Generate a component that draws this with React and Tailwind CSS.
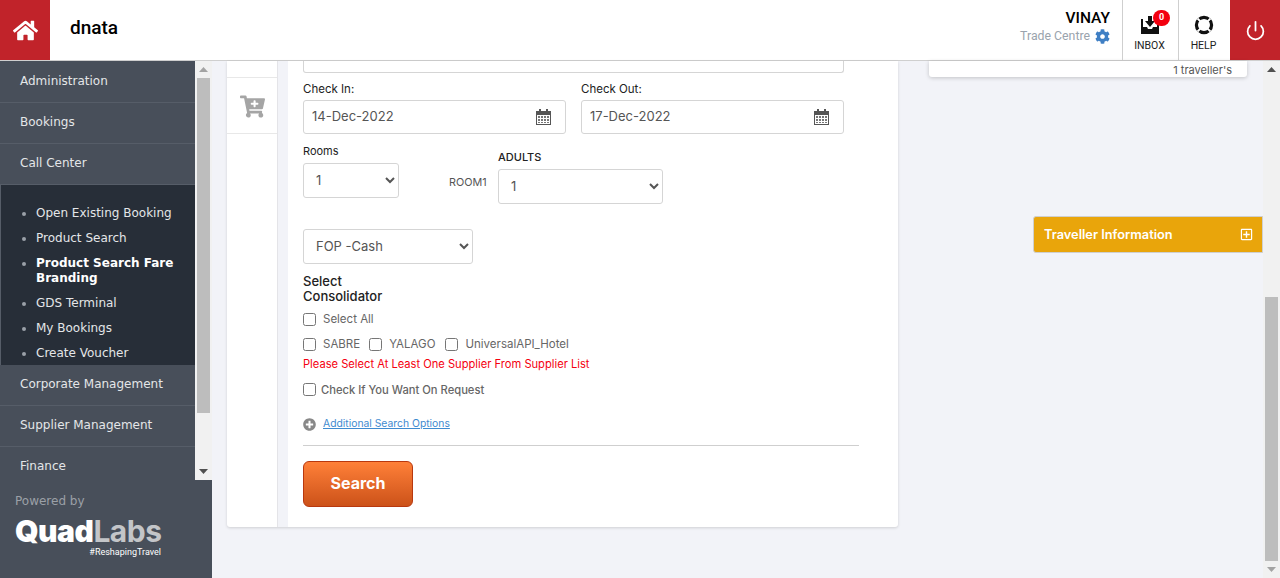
import { FaHome, FaCog, FaCartPlus, FaPlusCircle, FaRegPlusSquare } from 'react-icons/fa';
import { FiPower } from 'react-icons/fi';

const topItems = ['Administration', 'Bookings', 'Call Center'];
const bottomItems = ['Corporate Management', 'Supplier Management', 'Finance'];
const subItems = [
  { label: 'Open Existing Booking' },
  { label: 'Product Search' },
  { label: 'Product Search Fare Branding', active: true },
  { label: 'GDS Terminal' },
  { label: 'My Bookings' },
  { label: 'Create Voucher' },
];

const formFont = "font-['Inter','Liberation_Sans',sans-serif]";

const ScrollArrow = ({ down }) => (
  <svg width="9" height="5" viewBox="0 0 9 5" className={down ? 'rotate-180' : ''}>
    <path d="M4.5 0 9 5H0z" fill="currentColor" />
  </svg>
);

const InboxIcon = () => (
  <svg width="18" height="18" viewBox="0 0 18 18">
    <path fillRule="evenodd" d="M0 3h18v15H0zM2 5v6h4l1 2h4l1-2h4V5z" fill="#111" />
    <path d="M2 3h5v2H2zM11 3h5v2h-5z" fill="#fff" />
    <path d="M7 0h4v5h3l-5 6-5-6h3z" fill="#111" />
  </svg>
);

const RingIcon = () => (
  <svg width="20" height="20" viewBox="0 0 20 20">
    <circle cx="10" cy="10" r="7.6" fill="none" stroke="#111" strokeWidth="3.2" />
    <path d="M3.5 3.5 7.2 7.2M16.5 3.5 12.8 7.2M3.5 16.5 7.2 12.8M16.5 16.5 12.8 12.8" stroke="#fff" strokeWidth="1.8" />
  </svg>
);

const CalendarIcon = () => (
  <svg width="15" height="16" viewBox="0 0 15 16">
    <path fillRule="evenodd" d="M0 2h15v14H0zM1 6v9h13V6z" fill="#555" />
    <path d="M3 0h2v4H3zM10 0h2v4h-2z" fill="#555" />
    <path d="M2 7h2v2H2zM5 7h2v2H5zM8 7h2v2H8zM11 7h2v2h-2zM2 10h2v2H2zM5 10h2v2H5zM8 10h2v2H8zM11 10h2v2h-2zM2 13h2v1H2zM5 13h2v1H5zM8 13h2v1H8zM11 13h2v1h-2z" fill="#777" />
  </svg>
);

const MenuItem = ({ label }) => (
  <div className="h-[41px] flex items-center pl-5 pb-[3px] border-b border-[#565d68] text-[12px] text-[#e4e6e8]">
    {label}
  </div>
);

const Header = () => (
  <header className="h-[61px] shrink-0 flex bg-white border-b border-[#cfcfcf]">
    <div className="w-[50px] bg-[#c1232a] flex items-center justify-center">
      <FaHome className="text-white text-[25px]" />
    </div>
    <div className="flex-1 pl-5 flex items-center text-[19px] font-medium text-black font-['Roboto',sans-serif] pb-[3px]">
      dnata
    </div>
    <div className="flex flex-col items-end pr-3 pt-[9px]">
      <div className="text-[15.5px] font-medium leading-[18px] text-black font-['Roboto',sans-serif]">VINAY</div>
      <div className="flex items-center gap-[5px] text-[12.3px] text-[#9aa3ad] font-['Roboto',sans-serif]">
        Trade Centre <FaCog className="text-[#3f7fc4] text-[15px]" />
      </div>
    </div>
    <div className="relative w-[56px] border-l border-[#cfcfcf] flex flex-col items-center pt-[16px] pr-[2px]">
      <InboxIcon />
      <span className="absolute top-[10px] left-[30px] w-[17px] h-[16px] rounded-full bg-[#f3000f] text-white text-[9px] font-bold flex items-center justify-center font-['Roboto',sans-serif]">0</span>
      <span className="mt-[4px] text-[10.5px] text-[#222] font-['Roboto',sans-serif]">INBOX</span>
    </div>
    <div className="w-[52px] border-l border-[#cfcfcf] flex flex-col items-center pt-[15px] pr-[2px]">
      <RingIcon />
      <span className="mt-[3px] text-[10.5px] text-[#222] font-['Roboto',sans-serif]">HELP</span>
    </div>
    <div className="w-[50px] bg-[#c1232a] flex items-center justify-center">
      <FiPower className="text-white text-[21px]" />
    </div>
  </header>
);

const Sidebar = () => (
  <aside className="w-[212px] shrink-0 flex flex-col bg-[#484f5a] font-['DejaVu_Sans',sans-serif]">
    <div className="h-[419px] flex overflow-hidden">
      <nav className="w-[195px] pt-[1px]">
        {topItems.map((item) => <MenuItem key={item} label={item} />)}
        <ul className="bg-[#272e38] border-l border-[#565d68] pt-[21px] pl-[35px] pr-2 h-[180px] list-disc marker:text-[#9aa0a8] text-[12px] leading-[15px] text-[#e4e6e8]">
          {subItems.map((s) => (
            <li key={s.label} className={`mb-[10px] ${s.active ? 'font-bold text-white' : ''}`}>{s.label}</li>
          ))}
        </ul>
        {bottomItems.map((item) => <MenuItem key={item} label={item} />)}
      </nav>
      <div className="w-[17px] bg-[#f1f1f1] flex flex-col items-center text-[#a3a3a3]">
        <div className="h-[17px] flex items-center justify-center"><ScrollArrow /></div>
        <div className="w-[13px] h-[335px] bg-[#bdbdbd]" />
        <div className="flex-1" />
        <div className="h-[17px] flex items-center justify-center text-[#505050]"><ScrollArrow down /></div>
      </div>
    </div>
    <div className="pl-[15px] pt-[12px] text-[12px] text-[#9ba0a7]">Powered by</div>
    <div className="pl-[15px] mt-[7px] w-[161px]">
      <div className="text-[30px] leading-[28px] font-black tracking-[-0.5px] text-white font-['Inter',sans-serif]">
        Quad<span className="text-[#c3c5c8] font-bold">Labs</span>
      </div>
      <div className="mt-[2px] text-right text-[9px] leading-[10px] text-white font-['Roboto',sans-serif]">#ReshapingTravel</div>
    </div>
  </aside>
);

const DateField = ({ label, value }) => (
  <div className="w-[263px]">
    <label className="block text-[11.5px] leading-[14px] text-[#222] mb-[4px] -mt-[1px]">{label}</label>
    <div className="h-[34px] flex items-center justify-between border border-[#d5d5d5] rounded-[3px] pl-2 pr-[14px]">
      <input readOnly value={value} className="w-[150px] text-[13px] text-[#555] outline-none" />
      <CalendarIcon />
    </div>
  </div>
);

const Check = ({ label, className = '' }) => (
  <label className={`flex items-center gap-[7px] text-[11.5px] text-[#666] ${className}`}>
    <input type="checkbox" className="m-0 w-[13px] h-[13px]" />
    <span className="pt-[2px]">{label}</span>
  </label>
);

const SearchForm = () => (
  <div className={`flex-1 pl-[15px] text-[#333] ${formFont}`}>
    <div className="w-[541px] h-[12px] border border-t-0 border-[#d5d5d5] rounded-b-[3px]" />
    <div className="flex gap-[15px] mt-[10px]">
      <DateField label="Check In:" value="14-Dec-2022" />
      <DateField label="Check Out:" value="17-Dec-2022" />
    </div>
    <div className="flex mt-[10px]">
      <div className="w-[146px]">
        <div className="text-[11px] leading-[14px] text-[#222] mb-[5px]">Rooms</div>
        <select className="w-[96px] h-[35px] pl-2 pb-[2px] border border-[#d5d5d5] rounded-[3px] text-[13px] text-[#555] bg-white">
          <option>1</option>
        </select>
      </div>
      <div className="w-[49px] pt-[24px] mt-[7px] text-[10.8px] text-[#555]">ROOM1</div>
      <div className="pt-[6px]">
        <div className="text-[11px] leading-[14px] font-medium text-[#222] mb-[5px]">ADULTS</div>
        <select className="w-[165px] h-[35px] pl-2 pb-[2px] border border-[#d5d5d5] rounded-[3px] text-[13px] text-[#555] bg-white">
          <option>1</option>
        </select>
      </div>
    </div>
    <select className="block mt-[25px] w-[170px] h-[35px] pl-2 pb-[2px] border border-[#d5d5d5] rounded-[3px] text-[13px] text-[#555] bg-white">
      <option>FOP -Cash</option>
    </select>
    <div className="mt-[10px] w-[100px] text-[13px] leading-[15px] font-medium text-[#222]">Select Consolidator</div>
    <Check label="Select All" className="mt-[7px] h-[16px]" />
    <div className="flex gap-[9px] mt-[9px] h-[16px]">
      <Check label="SABRE" />
      <Check label="YALAGO" />
      <Check label="UniversalAPI_Hotel" className="ml-[1px]" />
    </div>
    <div className="mt-[4px] h-[16px] text-[11.15px] leading-[16px] text-[#f5000f]">Please Select At Least One Supplier From Supplier List</div>
    <Check label="Check If You Want On Request" className="mt-[9px] h-[16px] !gap-[5px] !text-[11.2px] font-medium" />
    <div className="flex items-center gap-[7px] mt-[19px] h-[16px]">
      <FaPlusCircle className="text-[#888] text-[13px]" />
      <a className="text-[10.35px] text-[#3f8bd0] underline">Additional Search Options</a>
    </div>
    <hr className="mt-[13px] w-[556px] border-[#cfcfcf]" />
    <button className="mt-[15px] w-[110px] h-[46px] pb-[2px] rounded-[6px] border border-[#b8380f] bg-gradient-to-b from-[#ff8038] to-[#cc5219] text-white text-[16px] font-bold">
      Search
    </button>
  </div>
);

export default function App() {
  return (
    <div className="h-[578px] w-[1280px] overflow-hidden flex flex-col bg-[#f2f3f8]">
      <Header />
      <div className="flex-1 flex min-h-0">
        <Sidebar />
        <main className="flex-1 flex min-w-0 pl-[15px]">
          <div className="w-[671px] h-[466px] flex bg-white rounded-b-[3px] shadow-[0_1px_3px_rgba(0,0,0,0.15)]">
            <div className="w-[51px] border-r border-[#e4e4e8] shrink-0">
              <div className="h-[17px] border-b border-[#e8e8e8]" />
              <div className="h-[56px] pt-[1px] border-b border-[#e8e8e8] flex items-center justify-center">
                <FaCartPlus className="text-[#a5a5a5] text-[25px]" />
              </div>
            </div>
            <div className="w-[10px] bg-[#f2f3f8] shrink-0" />
            <SearchForm />
          </div>
          <div className="flex-1 flex flex-col items-end">
            <div className="w-[318px] h-[16px] mr-[16px] bg-white rounded-b-[3px] shadow-[0_1px_4px_rgba(0,0,0,0.2)] text-right pr-[15px] text-[11px] leading-[18px] text-[#555] font-['Inter',sans-serif]">
              1 traveller's
            </div>
            <div className="w-[230px] h-[37px] mt-[139px] bg-[#e9a50b] border border-[#cfcfcf] rounded-l-[3px] flex items-center justify-between pl-[10px] pr-[9px] text-white text-[12.8px] font-semibold font-['Inter',sans-serif]">
              Traveller Information
              <FaRegPlusSquare className="text-[13px]" />
            </div>
          </div>
        </main>
        <div className="w-[17px] shrink-0 bg-[#f1f1f1] flex flex-col items-center text-[#505050]">
          <div className="h-[17px] flex items-center justify-center"><ScrollArrow /></div>
          <div className="h-[219px]" />
          <div className="w-[13px] flex-1 bg-[#bdbdbd]" />
          <div className="h-[17px] flex items-center justify-center text-[#a3a3a3]"><ScrollArrow down /></div>
        </div>
      </div>
    </div>
  );
}
